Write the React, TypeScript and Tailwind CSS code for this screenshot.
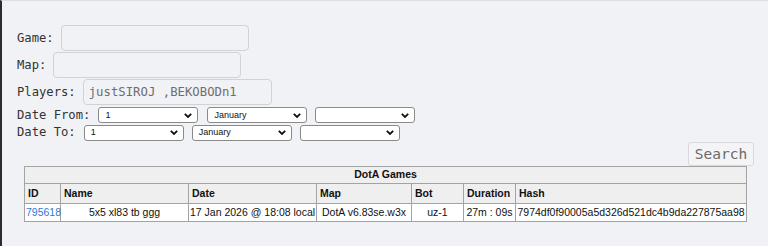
import React from "react";

const mono = { fontFamily: '"DejaVu Sans Mono", "Liberation Mono", monospace' };

function Chevron() {
  return (
    <svg width="8" height="5" viewBox="0 0 8 5" className="shrink-0">
      <polyline points="0.8,0.8 4,4 7.2,0.8" fill="none" stroke="#111" strokeWidth="1.8" />
    </svg>
  );
}

function FakeSelect({ value, ml }: { value: string; ml: string }) {
  return (
    <div
      className={`flex items-center justify-between w-[100px] h-[16px] bg-white border border-[#8a8a8a] rounded-[3px] pl-[6px] pr-[5px] ${ml}`}
    >
      <span className="text-[9px] leading-none text-[#111] font-['Liberation_Sans',Arial,sans-serif]">{value}</span>
      <Chevron />
    </div>
  );
}

function Label({ text }: { text: string }) {
  return (
    <span className="text-[12.2px] leading-none text-[#333] whitespace-pre" style={mono}>
      {text}
    </span>
  );
}

export default function App() {
  const th = "border border-[#a3a3a3] text-left font-bold px-[3px]";
  const td = "border border-[#a3a3a3] px-[1px] whitespace-nowrap";
  return (
    <div className="w-[768px] h-[249px] bg-white">
      <div className="h-[246px] bg-[#f1f2f6] border-l-[2px] border-[#2c2c30] border-t border-t-[#dedede] flex flex-col">
        <div className="pl-[15px] pt-[24px] flex flex-col">
          <div className="flex items-center h-[26px]">
            <Label text="Game:" />
            <div className="ml-[7px] w-[188px] h-[26px] border border-[#d2d2d6] rounded-[4px]" />
          </div>
          <div className="flex items-center h-[26px] mt-[1px]">
            <Label text="Map:" />
            <div className="ml-[7px] w-[188px] h-[26px] border border-[#d2d2d6] rounded-[4px]" />
          </div>
          <div className="flex items-center h-[26px] mt-[1px]">
            <Label text="Players:" />
            <div className="ml-[7px] w-[189px] h-[26px] border border-[#d2d2d6] rounded-[4px] flex items-center pl-[5px]">
              <span className="text-[12.3px] leading-none text-[#6e6e6e]" style={mono}>
                justSIROJ ,BEKOBODn1
              </span>
            </div>
          </div>
          <div className="flex items-center h-[16px] mt-[2px]">
            <Label text="Date From:" />
            <FakeSelect value="1" ml="ml-[8px]" />
            <FakeSelect value="January" ml="ml-[9px]" />
            <FakeSelect value="" ml="ml-[8px]" />
          </div>
          <div className="flex items-center h-[17px] mt-[1px]">
            <Label text="Date To:" />
            <FakeSelect value="1" ml="ml-[8px]" />
            <FakeSelect value="January" ml="ml-[8px]" />
            <FakeSelect value="" ml="ml-[8px]" />
          </div>
        </div>
        <div className="flex justify-end pr-[14px] mt-[1px]">
          <div
            className="h-[24px] w-[66px] border border-[#d9d9dc] rounded-[3px] bg-[#f4f4f6] flex items-center justify-center text-[14.5px] leading-none text-[#6a6a6a]"
            style={mono}
          >
            Search
          </div>
        </div>
        <div className="pl-[22px]">
          <table className="w-[722px] table-fixed border-collapse bg-white text-[10.5px] text-[#111] font-['Liberation_Sans',Arial,sans-serif]">
            <colgroup>
              <col className="w-[36px]" />
              <col className="w-[128px]" />
              <col className="w-[128px]" />
              <col className="w-[95px]" />
              <col className="w-[52px]" />
              <col className="w-[52px]" />
              <col className="w-[231px]" />
            </colgroup>
            <thead>
              <tr className="h-[17px] bg-[#efefef]">
                <th colSpan={7} className="border border-[#a3a3a3] font-bold text-center">
                  DotA Games
                </th>
              </tr>
              <tr className="h-[20px] bg-[#efefef]">
                <th className={th}>ID</th>
                <th className={th}>Name</th>
                <th className={th}>Date</th>
                <th className={th}>Map</th>
                <th className={th}>Bot</th>
                <th className={th}>Duration</th>
                <th className={th}>Hash</th>
              </tr>
            </thead>
            <tbody>
              <tr className="h-[18px]">
                <td className={`${td} text-left text-[#2f78d2]`}>795618</td>
                <td className={`${td} text-center`}>5x5 xl83 tb ggg</td>
                <td className={`${td} text-center`}>17 Jan 2026 @ 18:08 local</td>
                <td className={`${td} text-center`}>DotA v6.83se.w3x</td>
                <td className={`${td} text-center`}>uz-1</td>
                <td className={`${td} text-center`}>27m : 09s</td>
                <td className={`${td} text-center`}>7974df0f90005a5d326d521dc4b9da227875aa98</td>
              </tr>
            </tbody>
          </table>
        </div>
      </div>
    </div>
  );
}
